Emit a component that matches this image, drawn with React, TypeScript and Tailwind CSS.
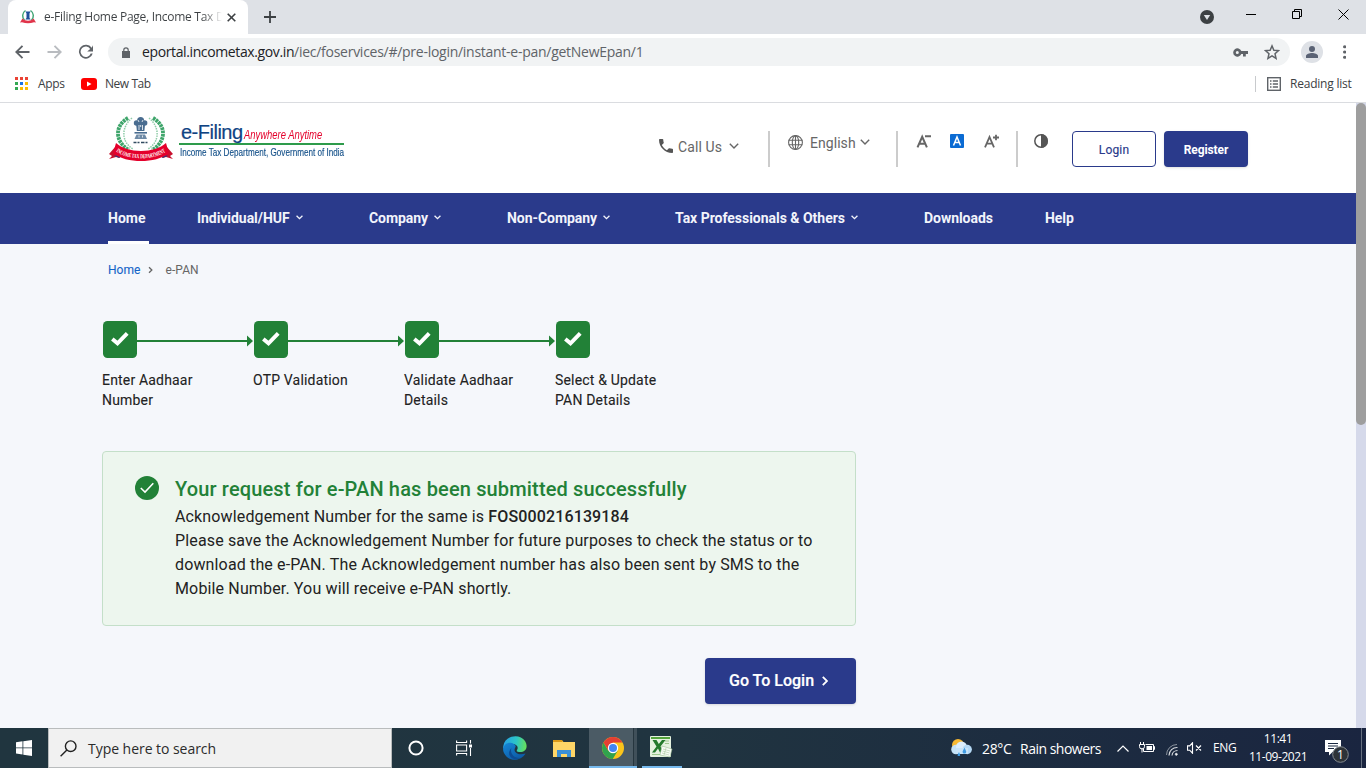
import React from 'react';

type IconProps = { className?: string; weight?: number };

function Emblem({ className }: IconProps) {
  return (
    <svg className={className} viewBox="0 0 66 48" fill="none">
      <path d="M20 3C6 11 7 27 21 35" stroke="#3fa56b" strokeWidth="3.800" strokeDasharray="2.600 .7" />
      <path d="M45 3C59 11 58 27 44 35" stroke="#3fa56b" strokeWidth="3.800" strokeDasharray="2.600 .7" />
      <path d="M24 3C13 12 13 27 25 34M41 3c11 9 11 24-1 31" stroke="#8fcca8" strokeWidth="1.500" strokeDasharray="1.500 1" />
      <g fill="#4a6d90">
        <circle cx="32.600" cy="5.500" r="3.500" />
        <circle cx="28.500" cy="8" r="2.700" />
        <circle cx="36.700" cy="8" r="2.700" />
        <path d="M28 8h9.200l-.8 8h-7.500z" />
        <rect x="26.500" y="17" width="12.500" height="1.600" />
        <path d="M28.500 19.500h8.500l2 4.500h-12.500z" opacity=".8" />
      </g>
      <path d="M30 5l1 2M35 5l-1 2M31 10v5M34.500 10v5M31 20.500v2M34.500 20.500v2M32.700 10v2" stroke="#fff" strokeWidth=".8" />
      <path d="M25.500 27.500h3m1 0h2m1.500 0h3.500m1 0h2" stroke="#314b60" strokeWidth="1.600" />
      <path d="M1 39l7-8 3 2v10l-3-1-7 2 3-3z" fill="#c8102e" />
      <path d="M65 39l-7-8-3 2v10l3-1 7 2-3-3z" fill="#c8102e" />
      <path d="M6 41l6-2v4zM60 41l-6-2v4z" fill="#243d82" />
      <path d="M8 28C19 38.500 47 38.500 58 28L61 38.500C47 48.500 19 48.500 5 38.500z" fill="#e4002b" />
      <path id="ribbon" d="M8 36.500C20 45.500 46 45.500 58 36.500" />
      <text fill="#fff" fontSize="6" fontWeight="700" fontFamily="Liberation Serif, serif" textLength="52" lengthAdjust="spacingAndGlyphs">
        <textPath href="#ribbon" textLength="52" lengthAdjust="spacingAndGlyphs">INCOME TAX DEPARTMENT</textPath>
      </text>
    </svg>
  );
}

function MiniEmblem() {
  return (
    <svg className="size-4" viewBox="0 0 16 16" fill="none">
      <path d="M5.500 1.500C1.800 4 2 8.500 4.500 11M10.500 1.500C14.200 4 14 8.500 11.500 11" stroke="#45a778" strokeWidth="1.500" />
      <path d="M5.500 2.500h5l-1 2v4.500l1.200 1.500H5.300L6.500 9V4.500z" fill="#1f4f9b" />
      <path d="M0 13.500l2.500-4c3 3 8 3 11 0l2.500 4-2-.3c-4 1.500-8 1.500-12 0z" fill="#e0344a" />
    </svg>
  );
}

function Chevron({ className, weight = 1.4 }: IconProps) {
  return (
    <svg className={className} viewBox="0 0 10 6" fill="none" stroke="currentColor">
      <path d="M.8.8L5 5 9.200.8" strokeWidth={weight} />
    </svg>
  );
}

function TabStrip() {
  return (
    <div className="flex h-[34px] shrink-0 items-end bg-[#dee1e6] pl-2">
      <div className="flex h-[34px] w-60 items-center rounded-t-lg bg-white pl-3">
        <MiniEmblem />
        <div className="ml-2 w-[180px] whitespace-nowrap bg-linear-to-r from-[#3c4043] from-88% to-transparent to-99% bg-clip-text text-[12px] tracking-[-0.28px] text-transparent [font-family:'Open_Sans',sans-serif]">
          e-Filing Home Page, Income Tax D
        </div>
        <svg className="ml-[3px] size-[9px]" viewBox="0 0 9 9" stroke="#3c4043" strokeWidth="1.600"><path d="M.7.700l7.600 7.600M8.300.700L.7 8.300" /></svg>
      </div>
      <svg className="mb-[11px] ml-4 size-3" viewBox="0 0 12 12" stroke="#3c4043" strokeWidth="1.800"><path d="M6 0v12M0 6h12" /></svg>
      <div className="ml-auto flex h-[34px]">
        <svg className="mt-[10px] mr-8 size-[14px]" viewBox="0 0 14 14"><circle cx="7" cy="7" r="7" fill="#3c4043" /><path d="M3.800 5h6.400L7 10z" fill="#dee1e6" /></svg>
        <div className="mt-[14px] mr-9 h-px w-[10px] bg-black" />
        <svg className="mt-[9px] mr-9 size-[10px]" viewBox="0 0 10 10" fill="none" stroke="#000"><path d="M.5 2.500h7v7h-7zM2.500 2.500v-2h7v7h-2" /></svg>
        <svg className="mt-[9px] mr-[17px] size-[11px]" viewBox="0 0 11 11" stroke="#000"><path d="M.5.500l10 10M10.500.500l-10 10" /></svg>
      </div>
    </div>
  );
}

function Toolbar() {
  return (
    <div className="flex h-9 shrink-0 items-center bg-white pl-[15px]">
      <svg className="h-[14px] w-[15px]" viewBox="0 0 15 14" fill="none" stroke="#5f6368" strokeWidth="1.900"><path d="M14.500 7H1.500M7.500.800L1.300 7l6.200 6.200" /></svg>
      <svg className="ml-[17px] h-[14px] w-[15px]" viewBox="0 0 15 14" fill="none" stroke="#b9bcc0" strokeWidth="1.900"><path d="M.5 7h13M7.500.800L13.700 7l-6.200 6.200" /></svg>
      <svg className="ml-[16px] size-4" viewBox="0 0 16 16"><path d="M13.700 3.700A7 7 0 1 0 14.700 9.500h-2A5.200 5.200 0 1 1 12.200 5L9.200 7.500H15V1.200z" fill="#5f6368" /></svg>
      <div className="ml-[14px] flex h-7 w-[1182px] items-center rounded-full bg-[#f1f3f4] pl-[14px]">
        <svg className="h-[11px] w-2" viewBox="0 0 8 11"><path d="M0 4h8v7H0z" fill="#5f6368" /><path d="M1.800 4.500V3a2.200 2.200 0 0 1 4.400 0v1.500" fill="none" stroke="#5f6368" strokeWidth="1.200" /></svg>
        <div className="ml-3 w-[520px] whitespace-nowrap text-[14px] leading-5 text-[#5f6368] [font-family:'Open_Sans',sans-serif]">
          <span className="tracking-[-0.38px] text-[#202124]">eportal.incometax.gov.in</span>
          <span className="tracking-[-0.27px]">/iec/foservices/#/pre-login/instant-e-pan/getNewEpan/1</span>
        </div>
        <svg className="ml-auto h-[9px] w-[15px]" viewBox="0 0 15 9"><path fillRule="evenodd" d="M8.300 3A4.200 4.200 0 1 0 8.300 6H10v2.500h2.800V6H15V3zM4.300 6a1.500 1.500 0 1 1 0-3 1.500 1.500 0 0 1 0 3z" fill="#5f6368" /></svg>
        <svg className="mr-[10px] ml-[16px] size-4" viewBox="0 0 24 24" fill="none" stroke="#5f6368" strokeWidth="2.200"><path d="M12 2.800l2.800 6.500 7 .6-5.300 4.700 1.600 7-6.100-3.700-6.100 3.700 1.600-7L2.200 9.900l7-.6z" /></svg>
      </div>
      <svg className="ml-[11px] size-[22px]" viewBox="0 0 22 22"><circle cx="11" cy="11" r="11" fill="#dee1e6" /><circle cx="11" cy="8" r="3" fill="#5a6274" /><path d="M5 17v-2c0-2 3.500-3 6-3s6 1 6 3v2z" fill="#5a6274" /></svg>
      <svg className="ml-5 h-[14px] w-[3.200px]" viewBox="0 0 3.200 14" fill="#5f6368"><circle cx="1.600" cy="1.700" r="1.600" /><circle cx="1.600" cy="7" r="1.600" /><circle cx="1.600" cy="12.300" r="1.600" /></svg>
    </div>
  );
}

function Bookmarks() {
  const colors = ['#ea4335', '#ea4335', '#ea4335', '#34a853', '#1a73e8', '#fbbc04', '#34a853', '#fbbc04', '#fbbc04'];
  return (
    <div className="flex h-[33px] shrink-0 items-center border-b border-[#dadce0] bg-white pl-[15px] pb-[5px] text-[12px] text-[#3c4043] [font-family:'Open_Sans',sans-serif]">
      <svg className="size-[13px]" viewBox="0 0 13 13">
        {colors.map((c, i) => <rect key={i} x={(i % 3) * 5} y={Math.floor(i / 3) * 5} width="3" height="3" fill={c} />)}
      </svg>
      <span className="ml-[10px] w-[43px] tracking-[-0.3px]">Apps</span>
      <svg className="h-3 w-4" viewBox="0 0 16 12"><rect width="16" height="12" rx="3" fill="#f00" /><path d="M6 3.500v5L10.500 6z" fill="#fff" /></svg>
      <span className="ml-2 tracking-[-0.45px]">New Tab</span>
      <div className="ml-auto h-4 w-px bg-[#c8cacd]" />
      <svg className="ml-[11px] size-[14px]" viewBox="0 0 14 14" fill="none" stroke="#5f6368" strokeWidth="1.400"><rect x=".7" y=".7" width="12.600" height="12.600" /><path d="M3 4h1.500M3 7h1.500M3 10h1.500M5.800 4H11M5.800 7H11M5.800 10H11" /></svg>
      <span className="ml-[9px] w-[76px] whitespace-nowrap tracking-[-0.22px]">Reading list</span>
    </div>
  );
}

function SiteHeader() {
  return (
    <div className="flex h-[90px] shrink-0 items-start bg-white pl-[108px]">
      <Emblem className="mt-[12px] h-12 w-[66px]" />
      <div className="mt-[19px] ml-[5px] w-[165px] whitespace-nowrap [font-family:'Liberation_Sans',sans-serif]">
        <div className="flex h-[23px] items-baseline border-b-2 border-[#2e9b4b] pl-[2px]">
          <span className="w-[65px] text-[20px] leading-[21px] tracking-[-0.5px] text-[#0f4383] [-webkit-text-stroke:.2px]">e-Filing</span>
          <span className="inline-block origin-left scale-x-[.785] text-[12px] text-[#e4002b] italic">Anywhere Anytime</span>
        </div>
        <div className="ml-px w-[200px] origin-left scale-x-[.738] text-[11px] leading-[15px] text-[#145089] [-webkit-text-stroke:.15px]">Income Tax Department, Government of India</div>
      </div>
      <div className="ml-[315px] flex text-[#666] [font-family:Roboto,sans-serif]">
        <svg className="mt-[36px] h-[14px] w-[14px]" viewBox="3 3 18 18" fill="#555"><path d="M6.600 10.800c1.400 2.800 3.800 5.100 6.600 6.600l2.200-2.200c.3-.3.700-.4 1-.2 1.100.4 2.300.6 3.600.6.600 0 1 .4 1 1V20c0 .6-.4 1-1 1C10.600 21 3 13.400 3 4c0-.6.500-1 1-1h3.500c.6 0 1 .4 1 1 0 1.200.2 2.400.6 3.600.1.300 0 .7-.2 1z" /></svg>
        <span className="mt-[34px] ml-[5px] w-[52px] whitespace-nowrap text-[14px] leading-5 tracking-[0.1px]">Call Us</span>
        <Chevron className="mt-[40px] -ml-px h-[6px] w-[10px]" />
        <div className="mt-7 ml-[29px] h-9 w-[2px] bg-[#ccc]" />
        <svg className="mt-[32px] ml-[18px] size-[15px]" viewBox="0 0 15 15" fill="none" stroke="#666" strokeWidth="1.100"><circle cx="7.500" cy="7.500" r="6.900" /><ellipse cx="7.500" cy="7.500" rx="3.200" ry="6.900" /><path d="M.6 5.200h13.800M.6 9.800h13.800M7.500.600v13.800" /></svg>
        <span className="mt-[30px] ml-[7px] w-[50px] whitespace-nowrap text-[14px] leading-5 tracking-[0.05px]">English</span>
        <Chevron className="mt-[36px] h-[6px] w-[10px]" />
        <div className="mt-7 ml-[26px] h-9 w-[2px] bg-[#ccc]" />
        <svg className="mt-[31px] ml-[18px] h-[14px] w-[16px]" viewBox="0 0 16 14" fill="none" stroke="#666" strokeWidth="2"><path d="M1.500 13.300L6.200 2.800l4.700 10.500M3 9.700h6.500M9 2.200H15" /></svg>
        <svg className="mt-[31px] ml-[18px] size-[14px]" viewBox="0 0 14 14" fill="none"><rect width="14" height="14" rx="1" fill="#0b6bd3" /><path d="M3.500 11.500L7 3l3.500 8.500M4.600 8.500h4.800" stroke="#fff" strokeWidth="1.500" /></svg>
        <svg className="mt-[31px] ml-[20px] h-[14px] w-[16px]" viewBox="0 0 16 14" fill="none" stroke="#666" strokeWidth="1.800"><path d="M1 13.300L5.500 3l4.500 10.300M3 9.700h5.500M9 3.500h6M12 .700v5.600" /></svg>
        <div className="mt-7 ml-4 h-9 w-[2px] bg-[#ccc]" />
        <svg className="mt-[31px] ml-4 size-[14px]" viewBox="0 0 14 14"><circle cx="7" cy="7" r="6.200" fill="none" stroke="#555" strokeWidth="1.500" /><path d="M7 0a7 7 0 0 1 0 14z" fill="#555" /></svg>
        <div className="mt-7 ml-[24px] flex h-9 w-[84px] items-center justify-center rounded border border-[#2a3a8b] pt-[2px] text-[12px] tracking-[0.15px] text-[#2a3a8b] [-webkit-text-stroke:.15px]">Login</div>
        <div className="mt-7 ml-2 flex h-9 w-[84px] items-center justify-center rounded bg-[#2a3a8b] pt-[2px] text-[12px] font-bold tracking-[-0.1px] text-white shadow-sm">Register</div>
      </div>
    </div>
  );
}

function NavBar() {
  const chevron = 'mt-[22px] h-[4.500px] w-[7px] overflow-visible';
  return (
    <div className="flex h-[51px] shrink-0 bg-[#2a3a8b] pl-[108px] text-[14px] leading-[50px] font-bold whitespace-nowrap text-[#f2f4fb] [font-family:Roboto,sans-serif]">
      <div className="h-[51px] w-[41px] border-b-[3px] border-white">Home</div>
      <div className="ml-12 flex w-[172px]"><span className="w-[99px] tracking-[-0.05px]">Individual/HUF</span><Chevron weight={1.9} className={chevron} /></div>
      <div className="flex w-[138px]"><span className="w-[65px] tracking-[-0.05px]">Company</span><Chevron weight={1.9} className={chevron} /></div>
      <div className="flex w-[168px]"><span className="w-[96px] tracking-[-0.05px]">Non-Company</span><Chevron weight={1.9} className={chevron} /></div>
      <div className="flex w-[249px]"><span className="w-[176px] tracking-[-0.02px]">Tax Professionals &amp; Others</span><Chevron weight={1.9} className={chevron} /></div>
      <div className="w-[121px] tracking-[-0.05px]">Downloads</div>
      <div className="tracking-[-0.05px]">Help</div>
    </div>
  );
}

function Steps() {
  const steps = [['Enter Aadhaar', 'Number'], ['OTP Validation'], ['Validate Aadhaar', 'Details'], ['Select & Update', 'PAN Details']];
  return (
    <div className="mt-[42px] flex">
      {steps.map((lines, i) => (
        <div key={lines[0]} className="w-[151px]">
          <div className="flex h-[37px] items-center pl-px">
            <svg className="h-[37px] w-[34px]" viewBox="0 0 34 37"><rect width="34" height="37" rx="4.500" fill="#228137" /><path d="M9.300 18l5.200 4.300 9.700-10" fill="none" stroke="#fff" strokeWidth="3.900" /></svg>
            {i < 3 && (
              <svg className="mt-[3px] h-3 w-[116px]" viewBox="0 0 116 12" fill="#228137"><path d="M0 5h111v2H0zM110 .500L116 6l-6 5.500z" /></svg>
            )}
          </div>
          <div className="mt-3 text-[14px] leading-5 tracking-[0.18px] text-[#222]">
            {lines.map((l) => <div key={l} className="whitespace-nowrap [-webkit-text-stroke:.1px]">{l}</div>)}
          </div>
        </div>
      ))}
    </div>
  );
}

function Main() {
  return (
    <div className="flex-1 overflow-hidden bg-[#f5f7fb] pl-[102px] [font-family:Roboto,sans-serif]">
      <div className="mt-4 ml-[6px] flex h-[19px] items-center text-[12px] text-[#666]">
        <span className="w-[39px] text-[#1464c8] [-webkit-text-stroke:.1px]">Home</span>
        <Chevron weight={2} className="h-[4px] w-[7px] -rotate-90 overflow-visible" />
        <span className="ml-[11.500px] tracking-[0.08px]">e-PAN</span>
      </div>
      <Steps />
      <div className="mt-[41px] flex h-[175px] w-[754px] rounded border border-[#c4dfc9] bg-[#edf6ee] pt-6 pl-8">
        <svg className="size-6 shrink-0" viewBox="0 0 24 24"><circle cx="12" cy="12" r="12" fill="#228137" /><path d="M5.800 12l4.200 4 8.300-8.800" fill="none" stroke="#fff" strokeWidth="1.600" /></svg>
        <div className="ml-4 whitespace-nowrap text-[#222]">
          <div className="h-[29px] text-[20px] leading-[26px] font-medium tracking-[0.15px] text-[#228137]">Your request for e-PAN has been submitted successfully</div>
          <div className="text-[16px] leading-6 tracking-[0.145px]">
            <div>Acknowledgement Number for the same is <span className="font-medium">FOS000216139184</span></div>
            <div>Please save the Acknowledgement Number for future purposes to check the status or to</div>
            <div>download the e-PAN. The Acknowledgement number has also been sent by SMS to the</div>
            <div>Mobile Number. You will receive e-PAN shortly.</div>
          </div>
        </div>
      </div>
      <div className="mt-8 ml-[603px] flex h-[46px] w-[151px] items-center rounded bg-[#2a3a8b] pl-6 text-[16px] font-medium whitespace-nowrap text-white shadow">
        <span className="w-[90px] [-webkit-text-stroke:.2px]">Go To Login</span>
        <Chevron weight={1.8} className="ml-px h-[6px] w-[10px] -rotate-90" />
      </div>
    </div>
  );
}

function Edge() {
  return (
    <svg className="size-6" viewBox="0 0 24 24">
      <defs>
        <linearGradient id="edgeTop" x1="0" y1=".3" x2="1" y2=".4"><stop stopColor="#279fe6" /><stop offset=".55" stopColor="#2cc5c8" /><stop offset="1" stopColor="#66e05c" /></linearGradient>
        <linearGradient id="edgeBody" x1="0" y1="0" x2=".7" y2="1"><stop stopColor="#1688d8" /><stop offset="1" stopColor="#0c59a4" /></linearGradient>
      </defs>
      <path d="M.3 10C2-1 17-3 22 5c4 7 0 11.500-6 11-3-.500-2.500-1.500-1.500-3 1-3-2-5.500-5.500-5C5 8 2 10 .1 13z" fill="url(#edgeTop)" />
      <path d="M.1 13C1 7 7 5.500 11 8c2 1.500 2 2.500 1 4-2 4 3 8 10.500 5.500C18 25 6 27 1 17c-.6-1.500-1-2.500-.9-4z" fill="url(#edgeBody)" />
      <path d="M8.500 12c-2 5 2.500 11 9.500 9.800C10 26 2 19 8.500 12z" fill="#0d4c94" />
    </svg>
  );
}

function Taskbar() {
  return (
    <div className="flex h-10 shrink-0 bg-linear-to-r from-[#20353f] via-[#203440] to-[#1a2540] text-white [font-family:'Open_Sans',sans-serif]">
      <div className="flex w-12 items-center pl-4"><svg className="size-4" viewBox="0 0 16 16" fill="#fff"><path d="M0 2.200L6.500 1.300v6.200H0zM7.300 1.200L16 0v7.500H7.300zM0 8.300h6.500v6.200L0 13.600zM7.300 8.300H16V16l-8.700-1.200z" /></svg></div>
      <div className="flex w-[344px] items-center border border-[#b9bcbd] bg-[#f1f1f1] pl-[11px] text-[14px] text-[#2b2b2b]">
        <svg className="size-[17px]" viewBox="0 0 17 17" fill="none" stroke="#222" strokeWidth="1.400"><circle cx="10.700" cy="6.200" r="5.300" /><path d="M6.900 10L.6 16.300" /></svg>
        <span className="ml-[11px] whitespace-nowrap tracking-[-0.04px]">Type here to search</span>
      </div>
      <div className="flex w-12 items-center justify-center"><svg className="size-4" viewBox="0 0 16 16"><circle cx="8" cy="8" r="6.600" fill="none" stroke="#fff" strokeWidth="2" /></svg></div>
      <div className="flex w-12 items-center justify-center"><svg className="size-4" viewBox="0 0 16 16" fill="none" stroke="#fff" strokeWidth="1.100"><path d="M.6.500v2h10v-2M.6 15.500v-2h10v2M.6 5h10v6h-10zM14.500 0v3.500M14.500 8v8" /><path d="M13 4.500h3v3h-3z" fill="#fff" stroke="none" /></svg></div>
      <div className="flex w-[54px] items-center justify-center">
        <Edge />
      </div>
      <div className="flex w-[47px] items-center pl-[11px]">
        <svg className="h-[19px] w-[22px]" viewBox="0 0 22 19"><path d="M0 1h9l1.500 2H21v15H0z" fill="#f0b42c" /><path d="M0 3h22v15H0z" fill="#ffd667" /><path d="M0 1h9v2H0z" fill="#dc9a18" /><path d="M4 18v-7h14v7h-4v-3H8v3z" fill="#3a8fd6" /></svg>
      </div>
      <div className="flex h-10 w-12 border-b-2 border-[#76b9ed] bg-[#4b5b65]">
        <div className="flex w-11 items-center pt-[2px] pl-[13px]">
          <svg className="size-[22px]" viewBox="0 0 22 22"><circle cx="11" cy="11" r="11" fill="#fbc41b" /><path d="M1.500 5.500A11 11 0 0 0 10.800 22L15.700 13.800H6.300z" fill="#30a24d" /><path d="M1.500 5.500A11 11 0 0 1 20.500 5.500H11v8H6.200z" fill="#e43f33" /><circle cx="11" cy="11" r="5.200" fill="#fff" /><circle cx="11" cy="11" r="4" fill="#4285f4" /></svg>
        </div>
        <div className="ml-auto w-[4px] border-l border-[#26363f] bg-[#40505a]" />
      </div>
      <div className="ml-[5px] flex h-10 w-10 items-start border-b-2 border-[#76b9ed] pt-2 pl-[8px]">
        <svg className="h-[22px] w-[23px]" viewBox="0 0 23 22"><rect width="21" height="21" rx="1" fill="#e5f2df" /><path d="M1 1h19v2H1z" fill="#54a33c" /><path d="M15 5h4M15 7.500h4M2 18.500h8" stroke="#9cc78c" /><path d="M2.500 4h4l2.300 4L12 4h3.500L10.500 10.500l3 6H10l-2-4-3 4H2l4.500-6z" fill="#247a2c" /><path d="M12 10l10 3-2 8-10-2z" fill="#fafcf8" stroke="#9cbd92" strokeWidth=".6" /><path d="M13 13l7 2M12.500 15l7 2M12 17l7 2M16 12l-2 7" stroke="#a9c99e" strokeWidth=".6" /></svg>
      </div>
      <div className="ml-auto flex w-[415px] items-center whitespace-nowrap">
        <svg className="mt-[-1px] h-[17px] w-[21px]" viewBox="0 0 21 17"><circle cx="7" cy="6" r="6" fill="#f8b932" /><circle cx="5" cy="10.500" r="4.800" fill="#c5e2f7" /><circle cx="10.500" cy="8" r="5.500" fill="#dcedfb" /><circle cx="16.200" cy="10.500" r="4.700" fill="#b5d9f5" /><path d="M5 9h12v6H5z" fill="#c9e4f8" /><path d="M8 13l-1.300 2.500a1.300 1.300 0 1 0 2.300 0zM13.500 8.500l-1.700 3.500a1.800 1.800 0 1 0 3.200 0z" fill="#3f9be2" /></svg>
        <span className="ml-[10px] w-[38px] text-[14px] tracking-[-0.35px]">28°C</span>
        <span className="w-[97px] text-[14px] tracking-[-0.5px]">Rain showers</span>
        <svg className="h-[7px] w-3" viewBox="0 0 12 7" fill="none" stroke="#fff" strokeWidth="1.200"><path d="M.5 6.500L6 1l5.500 5.500" /></svg>
        <svg className="mb-px ml-[10px] h-[11px] w-4" viewBox="0 0 16 11" fill="none" stroke="#fff"><path d="M6.500 2.500h8v7h-10V7M14.500 4.500h1v3h-1M1.500 0v2M4.500 0v2M.5 2.500h5v2a2 2 0 0 1-5 0zM3 6v4.500" /><path d="M7.500 4h5.500v4H7.500z" fill="#fff" stroke="none" /></svg>
        <svg className="mt-[3px] ml-[11px] size-3" viewBox="0 0 12 12" fill="none" stroke="#d6dade"><path d="M.5 11A10.500 10.500 0 0 1 11 .500" opacity=".6" /><path d="M3 11.500A8 8 0 0 1 11.500 3.500M6 11.500a5.500 5.500 0 0 1 5.500-5" strokeWidth="1.200" /><circle cx="10.300" cy="10.300" r="1" fill="#fff" /></svg>
        <svg className="ml-[9px] h-3 w-[15px]" viewBox="0 0 15 12" fill="none" stroke="#fff" strokeWidth="1.150"><path d="M.5 3.800h2.200L5.500.800v10.400L2.700 8.200H.5zM9 3.500l5 5M14 3.500l-5 5" /></svg>
        <span className="ml-[11px] w-[34px] text-[12px] tracking-[-0.4px]">ENG</span>
        <div className="w-[62px] text-center text-[12px] leading-[18px] tracking-[-0.45px]"><div>11:41</div><div>11-09-2021</div></div>
        <svg className="mt-[5px] ml-[16px] h-[24px] w-[24px]" viewBox="0 0 24 24"><path d="M0 1h16v12H7.500L4 16.500V13H0z" fill="#fff" /><path d="M3 4.500h10M3 7h10M3 9.500h6" stroke="#1b2941" /><circle cx="15.500" cy="15.500" r="7.800" fill="#2e3338" stroke="#858b90" /><text x="15.500" y="19.500" textAnchor="middle" fontSize="12" fill="#fff" fontFamily="Open Sans, sans-serif">1</text></svg>
        <div className="ml-auto mr-[4px] h-10 w-px bg-[#66707f]" />
      </div>
    </div>
  );
}

export default function App() {
  return (
    <div className="flex h-[768px] w-[1366px] flex-col overflow-hidden bg-white">
      <TabStrip />
      <Toolbar />
      <Bookmarks />
      <div className="flex min-h-0 flex-1">
        <div className="flex w-[1356px] flex-col">
          <SiteHeader />
          <NavBar />
          <Main />
        </div>
        <div className="w-[10px] bg-[#d5d9ea]"><div className="h-[322px] rounded-full bg-[#9e9e9e]" /></div>
      </div>
      <Taskbar />
    </div>
  );
}
